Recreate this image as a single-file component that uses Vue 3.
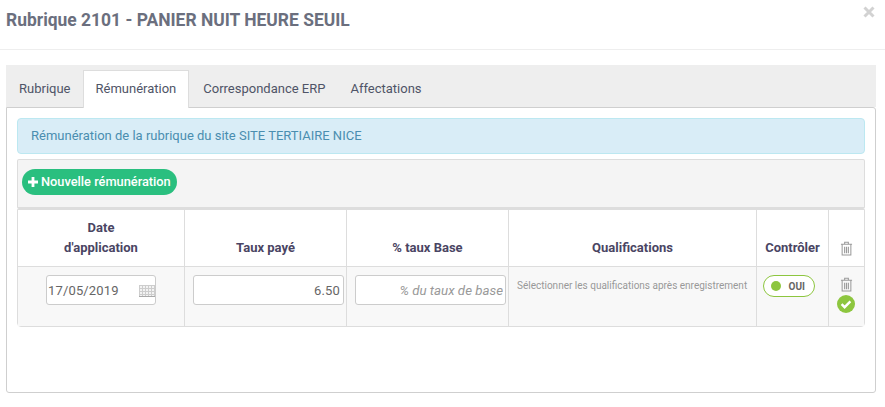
<script setup>
const tabs = ['Rubrique', 'Rémunération', 'Correspondance ERP', 'Affectations']
</script>

<template>
  <div class="modal">
    <header class="head">
      <h1>Rubrique 2101 - PANIER NUIT HEURE SEUIL</h1>
      <svg class="close" width="12" height="12" viewBox="0 0 12 12"><path d="M1.5 1.5l9 9M10.5 1.5l-9 9" stroke="#d2d2d2" stroke-width="3" fill="none"/></svg>
    </header>
    <div class="body">
      <nav class="tabs">
        <a v-for="(t, i) in tabs" :key="t" class="tab" :class="{ active: i === 1 }">{{ t }}</a>
      </nav>
      <section class="panel">
        <div class="alert">Rémunération de la rubrique du site SITE TERTIAIRE NICE</div>
        <div class="well">
          <button class="add">
            <svg width="10" height="10" viewBox="0 0 10 10"><path d="M3.6 0h2.8v3.6H10v2.8H6.4V10H3.6V6.4H0V3.6h3.6z" fill="#fff"/></svg>
            <span>Nouvelle rémunération</span>
          </button>
        </div>
        <table class="grid">
          <colgroup>
            <col style="width:167px" /><col style="width:162px" /><col style="width:162px" />
            <col style="width:248px" /><col style="width:72px" /><col />
          </colgroup>
          <thead>
            <tr>
              <th>Date<br />d'application</th>
              <th>Taux payé</th>
              <th>% taux Base</th>
              <th>Qualifications</th>
              <th>Contrôler</th>
              <th class="ic">
                <svg class="trash" width="13" height="15" viewBox="0 0 14 16"><g fill="none" stroke="#9a9a9a" stroke-width="1.1"><path d="M1 3.5h12M5 3.3V1.2h4v2.1M2.3 3.7V15h9.4V3.7"/><path d="M5 6v7M7 6v7M9 6v7" stroke-width="1.2"/></g></svg>
              </th>
            </tr>
          </thead>
          <tbody>
            <tr>
              <td class="c">
                <div class="date">
                  <span>17/05/2019</span>
                  <svg width="16" height="12" viewBox="0 0 16 12"><rect width="16" height="12" fill="#f3f3f3"/><path d="M0 .5h16M0 3.5h16M0 6.5h16M0 9.5h16M.5 0v12M3.5 0v12M6.5 0v12M9.5 0v12M12.5 0v12M15.5 0v12" stroke="#cdcdcd" stroke-width="1"/><path d="M0 11.5h16" stroke="#a9a9a9" stroke-width="1"/></svg>
                </div>
              </td>
              <td class="c"><input class="inp" value="6.50" /></td>
              <td class="c"><input class="inp ph" placeholder="% du taux de base" /></td>
              <td class="qual">Sélectionner les qualifications après enregistrement</td>
              <td class="c">
                <span class="toggle"><i></i><b>OUI</b></span>
              </td>
              <td class="ic act">
                <svg class="trash" width="13" height="15" viewBox="0 0 14 16"><g fill="none" stroke="#9a9a9a" stroke-width="1.1"><path d="M1 3.5h12M5 3.3V1.2h4v2.1M2.3 3.7V15h9.4V3.7"/><path d="M5 6v7M7 6v7M9 6v7" stroke-width="1.2"/></g></svg>
                <svg class="ok" width="18" height="18" viewBox="0 0 18 18"><circle cx="9" cy="9" r="9" fill="#8dc63f"/><path d="M4.6 9.2l3 3 5.8-5.8" fill="none" stroke="#fff" stroke-width="2.4"/></svg>
              </td>
            </tr>
          </tbody>
        </table>
      </section>
    </div>
  </div>
</template>

<style>
html, body { margin: 0; background: #fff; }
</style>

<style scoped>
.modal {
  width: 885px;
  height: 407px;
  overflow: hidden;
  font-family: Roboto, "Liberation Sans", sans-serif;
  color: #4f5467;
  position: relative;
}
.head {
  height: 49px;
  border-bottom: 1px solid #eeeeee;
  padding-left: 6px;
}
.head h1 {
  margin: 0;
  padding-top: 9px;
  font-size: 17.45px;
  line-height: 22px;
  font-weight: 700;
  color: #6b6f7e;
}
.close {
  position: absolute;
  top: 6px;
  right: 10px;
}
.body { padding: 15px 9px 0 6px; }
.tabs {
  display: flex;
  height: 42px;
  background: #eeeeee;
  align-items: flex-end;
}
.tab {
  height: 37px;
  box-sizing: border-box;
  padding: 0 12px;
  font-size: 13px;
  line-height: 36px;
  color: #4f5467;
  border: 1px solid transparent;
  border-bottom: 0;
}
.tab:first-child { padding-right: 11px; }
.tab:last-child { margin-left: -1px; }
.tab.active {
  background: #fff;
  border-color: #dddddd;
  margin-bottom: -1px;
  margin-right: 1px;
  height: 38px;
  position: relative;
}
.panel {
  height: 286px;
  box-sizing: border-box;
  border: 1px solid #cfcfcf;
  border-radius: 0 3px 3px 3px;
  padding: 10px;
  background: #fff;
}
.alert {
  height: 36px;
  box-sizing: border-box;
  background: #d9edf7;
  border: 1px solid #bce8f1;
  border-radius: 4px;
  padding: 0 13px;
  font-size: 13px;
  line-height: 34px;
  color: #4a8eb0;
}
.well {
  margin-top: 5px;
  height: 50px;
  box-sizing: border-box;
  background: #f4f4f4;
  border: 1px solid #dddddd;
  border-bottom-width: 2px;
  border-radius: 2px;
  padding: 9px 4px;
}
.add {
  display: flex;
  align-items: center;
  gap: 3px;
  height: 26px;
  width: 155px;
  padding: 0 0 0 6px;
  border: 0;
  border-radius: 13px;
  background: #2abf7f;
  color: #fff;
  font: 500 12.8px Roboto, sans-serif;
  white-space: nowrap;
}
.add span { position: relative; top: -1px; }
.grid {
  width: 848px;
  height: 118px;
  table-layout: fixed;
  border-collapse: separate;
  border-spacing: 0;
  border: 1px solid #dddddd;
  border-radius: 0 0 4px 4px;
  box-sizing: border-box;
}
.grid th {
  height: 57px;
  box-sizing: border-box;
  padding: 0 0 8px;
  font-size: 13px;
  line-height: 20px;
  font-weight: 700;
  color: #4a4563;
  vertical-align: bottom;
  text-align: center;
  border-right: 1px solid #dddddd;
  border-bottom: 1px solid #dddddd;
}
.grid th:last-child, .grid td:last-child { border-right: 0; }
.grid td {
  background: #f8f8f8;
  border-right: 1px solid #dddddd;
  vertical-align: top;
  padding: 0;
}
.c { text-align: center; }
.c > * { margin-top: 8px; }
.date {
  display: inline-flex;
  box-sizing: border-box;
  width: 110px;
  height: 30px;
  align-items: center;
  justify-content: space-between;
  background: #fff;
  border: 1px solid #cccccc;
  border-radius: 3px;
  padding: 0 0 0 1px;
  font-size: 13px;
  color: #666;
  letter-spacing: 0.15px;
}
.date svg { margin-top: 2px; }
.inp {
  display: block;
  box-sizing: border-box;
  width: 151px;
  height: 30px;
  margin: 8px 0 0 8px;
  background: #fff;
  border: 1px solid #cccccc;
  border-radius: 3px;
  padding: 0 3px;
  text-align: right;
  font: 13px Roboto, sans-serif;
  color: #666;
  letter-spacing: 0.15px;
  outline: none;
}
.ph { padding-right: 2px; letter-spacing: 0; font-size: 13.3px; }
.ph::placeholder { color: #999; font-style: italic; opacity: 1; }
.qual {
  font-size: 10px;
  line-height: 14px;
  color: #999;
  padding: 12px 0 0 8px !important;
  white-space: nowrap;
}
.toggle {
  display: inline-flex;
  align-items: center;
  box-sizing: border-box;
  width: 52px;
  height: 22px;
  border: 1px solid #8dc63f;
  border-radius: 11px;
  background: #fff;
  padding-left: 7px;
  margin-right: 8px;
}
.toggle i { width: 10px; height: 10px; border-radius: 50%; background: #8dc63f; }
.toggle b { font-size: 10px; font-weight: 700; color: #666; margin-left: 8px; }
.ic { text-align: center; }
.grid th.ic { padding-bottom: 10px; }
.trash { display: block; margin: 0 auto; position: relative; left: -0.5px; }
.act .trash { margin-top: 10px; }
.ok { display: block; margin: 3px auto 0; position: relative; left: -1px; }
</style>
